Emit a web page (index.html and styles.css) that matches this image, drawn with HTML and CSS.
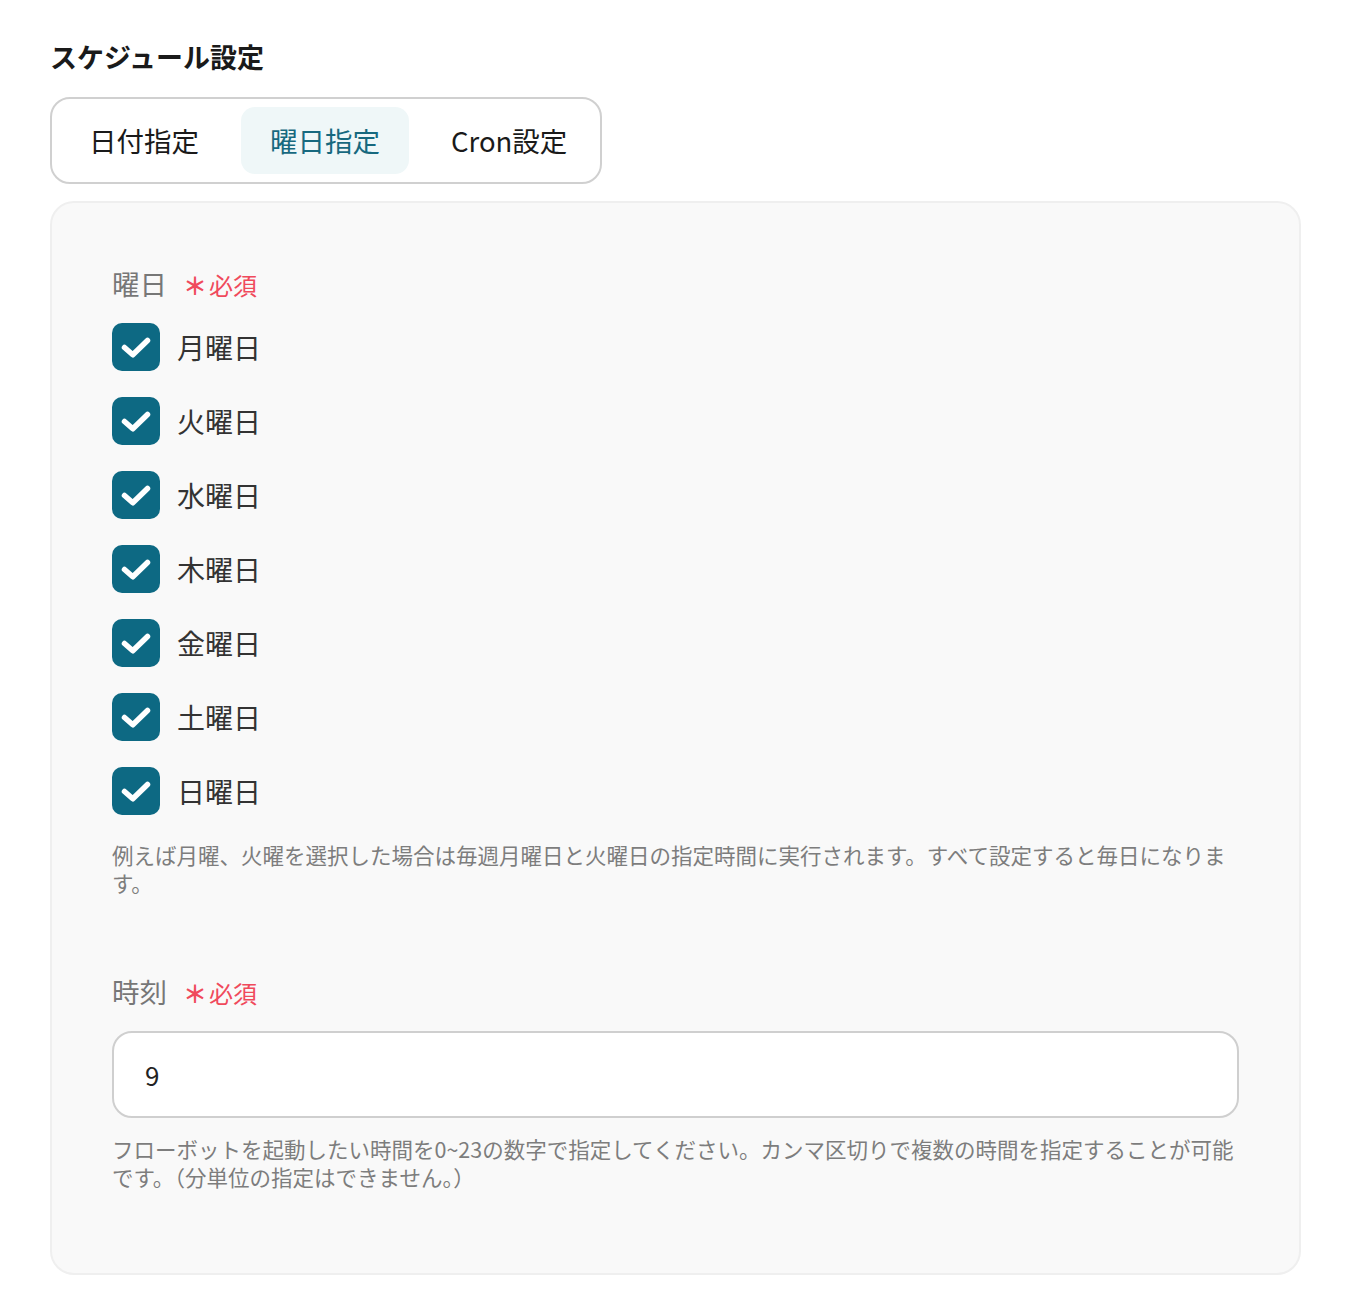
FILE: index.html
```html
<!DOCTYPE html>
<html lang="ja">
<head>
    <meta charset="UTF-8">
    <meta name="viewport" content="width=device-width, initial-scale=1.0">
    <title>スケジュール設定</title>
    <link rel="stylesheet" href="styles.css">
</head>
<body>

    <h2 class="title">スケジュール設定</h2>

    <div class="tabs">
        <button class="tab" type="button">日付指定</button>
        <button class="tab active" type="button">曜日指定</button>
        <button class="tab" type="button">Cron設定</button>
    </div>

    <div class="panel">
        <div class="field">
            <div class="field-label">曜日<span class="required"><span class="star">＊</span>必須</span></div>

            <div class="check-list">
                <label class="check"><input type="checkbox" checked><span class="box"><svg viewBox="0 0 48 48"><path d="M12.5 24.5 L20.8 31.8 L35.5 17.5"/></svg></span>月曜日</label>
                <label class="check"><input type="checkbox" checked><span class="box"><svg viewBox="0 0 48 48"><path d="M12.5 24.5 L20.8 31.8 L35.5 17.5"/></svg></span>火曜日</label>
                <label class="check"><input type="checkbox" checked><span class="box"><svg viewBox="0 0 48 48"><path d="M12.5 24.5 L20.8 31.8 L35.5 17.5"/></svg></span>水曜日</label>
                <label class="check"><input type="checkbox" checked><span class="box"><svg viewBox="0 0 48 48"><path d="M12.5 24.5 L20.8 31.8 L35.5 17.5"/></svg></span>木曜日</label>
                <label class="check"><input type="checkbox" checked><span class="box"><svg viewBox="0 0 48 48"><path d="M12.5 24.5 L20.8 31.8 L35.5 17.5"/></svg></span>金曜日</label>
                <label class="check"><input type="checkbox" checked><span class="box"><svg viewBox="0 0 48 48"><path d="M12.5 24.5 L20.8 31.8 L35.5 17.5"/></svg></span>土曜日</label>
                <label class="check"><input type="checkbox" checked><span class="box"><svg viewBox="0 0 48 48"><path d="M12.5 24.5 L20.8 31.8 L35.5 17.5"/></svg></span>日曜日</label>
            </div>

            <p class="help">例えば月曜、火曜を選択した場合は毎週月曜日と火曜日の指定時間に実行されます。すべて設定すると毎日になります。</p>
        </div>

        <div class="field">
            <div class="field-label">時刻<span class="required"><span class="star">＊</span>必須</span></div>
            <input class="text-input" type="text" value="9">
            <p class="help help-input">フローボットを起動したい時間を0~23の数字で指定してください。カンマ区切りで複数の時間を指定することが可能です。（分単位の指定はできません。）</p>
        </div>
    </div>

</body>
</html>
```

FILE: styles.css
```css
* {
    margin: 0;
    padding: 0;
    box-sizing: border-box;
}

body {
    font-family: 'Noto Sans CJK JP', 'Noto Sans', sans-serif;
    background-color: #fff;
    color: #222;
    padding: 37px 45px 0 50px;
}

.title {
    font-size: 27px;
    line-height: 40px;
    font-weight: 700;
    color: #1a1a1a;
    margin-bottom: 20px;
}

.tabs {
    display: inline-flex;
    gap: 13px;
    padding: 8px 4px 8px 8px;
    border: 2px solid #d0d0d0;
    border-radius: 20px;
    background-color: #fff;
    margin-bottom: 17px;
}

.tab {
    font-family: inherit;
    font-size: 27.5px;
    line-height: 67px;
    height: 67px;
    padding: 0 29px;
    border: none;
    border-radius: 14px;
    background: none;
    color: #1a1a1a;
    cursor: pointer;
}

.tab.active {
    background-color: #eff7f8;
    color: #17697f;
}

.panel {
    background-color: #f9f9f9;
    border: 2px solid #efefef;
    border-radius: 24px;
    padding: 60px 60px 82px;
}

.field + .field {
    margin-top: 74px;
}

.field-label {
    font-size: 27.5px;
    line-height: 40px;
    color: #777;
    margin-bottom: 18px;
}

.required {
    color: #f04a5c;
    font-size: 24px;
    margin-left: 16px;
}

.star {
    font-weight: 700;
    margin-right: 2px;
}

.check-list {
    display: flex;
    flex-direction: column;
    gap: 26px;
}

.check {
    display: flex;
    align-items: center;
    gap: 17px;
    font-size: 28px;
    color: #333;
    height: 48px;
    cursor: pointer;
}

.check input {
    display: none;
}

.box {
    width: 48px;
    height: 48px;
    border-radius: 10px;
    background-color: #0d6983;
    display: flex;
}

.box svg {
    width: 48px;
    height: 48px;
    fill: none;
    stroke: #fff;
    stroke-width: 5.5;
    stroke-linecap: round;
    stroke-linejoin: round;
}

.help {
    font-size: 21.5px;
    line-height: 28px;
    color: #7d7d7d;
    margin-top: 26px;
}

.help-input {
    margin-top: 17px;
}

.text-input {
    display: block;
    width: 100%;
    height: 87px;
    border: 2px solid #cfcfcf;
    border-radius: 20px;
    background-color: #fff;
    padding: 0 31px;
    font-family: inherit;
    font-size: 26px;
    color: #222;
    outline: none;
}

.text-input:focus {
    border-color: #0d6983;
}
```
